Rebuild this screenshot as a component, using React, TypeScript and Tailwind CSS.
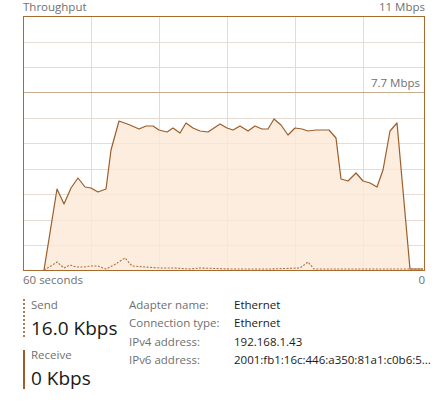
const receive: [number, number][] = [
  [44, 270], [57, 189], [64, 204], [71, 188], [78, 178], [85, 187], [91, 188], [98, 192],
  [106, 189], [111, 150], [119, 121], [130, 125], [139, 129], [146, 126], [153, 126],
  [159, 130], [167, 132], [173, 128], [180, 133], [186, 123], [193, 128], [200, 131],
  [208, 132], [220, 124], [227, 128], [233, 130], [240, 126], [248, 131], [255, 126],
  [262, 129], [268, 129], [274, 119], [281, 125], [288, 135], [295, 128], [302, 129],
  [308, 131], [316, 130], [329, 130], [336, 138], [341, 179], [348, 181], [356, 173],
  [363, 181], [370, 183], [377, 187], [383, 170], [390, 131], [397, 123], [410, 269],
  [423, 269],
];

const send: [number, number][] = [
  [44, 270], [51, 266], [57, 262], [64, 268], [70, 265], [76, 267], [84, 267], [91, 266],
  [98, 266], [106, 269], [114, 265], [125, 258], [132, 266], [145, 267], [160, 268],
  [175, 268], [190, 269], [200, 268], [230, 269], [270, 269], [300, 268], [308, 262],
  [314, 269], [340, 269], [380, 269], [423, 269],
];

const pts = (p: [number, number][]) => p.map(([x, y]) => `${x},${y}`).join(' ');

const verticals = [91, 159, 227, 295, 363];
const horizontals = [42, 67, 118, 143, 169, 194, 220, 245];

function Chart() {
  return (
    <div className="relative h-[255px] border border-[#a86a2e]">
      <svg width="400" height="253" viewBox="24 17 400 253" className="block">
        {verticals.map((x) => (
          <line key={x} x1={x + 0.5} y1="17" x2={x + 0.5} y2="270" stroke="#e6dbd2" strokeWidth="1" />
        ))}
        {horizontals.map((y) => (
          <line key={y} x1="24" y1={y + 0.5} x2="424" y2={y + 0.5} stroke="#e6dbd2" strokeWidth="1" />
        ))}
        <line x1="24" y1="92.5" x2="424" y2="92.5" stroke="#c9ab8e" strokeWidth="1" />
        <polygon points={pts(receive) + ' 423,270 44,270'} fill="#fbe8d7" fillOpacity="0.8" />
        <polyline points={pts(receive)} fill="none" stroke="#9d5d28" strokeWidth="1.2" strokeLinejoin="round" />
        <polyline points={pts(send)} fill="none" stroke="#ad7044" strokeWidth="1.1" strokeDasharray="2 1.5" />
      </svg>
      <span className="absolute right-[4px] top-[58px] text-[11.5px] leading-[16px] text-[#707070]">7.7 Mbps</span>
    </div>
  );
}

const info = [
  ['Adapter name:', 'Ethernet'],
  ['Connection type:', 'Ethernet'],
  ['IPv4 address:', '192.168.1.43'],
  ['IPv6 address:', '2001:fb1:16c:446:a350:81a1:c0b6:5...'],
];

export default function App() {
  return (
    <div className="w-[441px] h-[403px] overflow-hidden bg-white font-['Open_Sans',sans-serif] text-[11.5px]">
      <div className="ml-[23px] w-[402px]">
        <div className="flex justify-between h-[16px] leading-[14px] text-[#707070]">
          <span>Throughput</span>
          <span>11 Mbps</span>
        </div>
        <Chart />
        <div className="flex justify-between h-[20px] leading-[18px] text-[#707070]">
          <span>60 seconds</span>
          <span>0</span>
        </div>
      </div>

      <div className="flex mt-[5px] ml-[23px]">
        <div className="w-[106px] flex flex-col gap-[6px]">
          <div className="flex">
            <div className="my-[3px] border-l-2 border-dotted border-[#b07a52]" />
            <div className="pl-[6px]">
              <div className="leading-[18px] text-[#707070]">Send</div>
              <div className="mt-[2px] text-[19px] leading-[24px] text-[#1a1a1a]">16.0 Kbps</div>
            </div>
          </div>
          <div className="flex">
            <div className="mt-[4px] mb-[1px] border-l-2 border-[#9d5d28]" />
            <div className="pl-[6px]">
              <div className="leading-[18px] text-[#707070]">Receive</div>
              <div className="mt-[2px] text-[19px] leading-[24px] text-[#1a1a1a]">0 Kbps</div>
            </div>
          </div>
        </div>
        <div className="flex flex-col">
          {info.map(([k, v]) => (
            <div key={k} className="flex leading-[18.4px]">
              <span className="w-[105px] text-[#707070]">{k}</span>
              <span className="text-[#1a1a1a]">{v}</span>
            </div>
          ))}
        </div>
      </div>
    </div>
  );
}
